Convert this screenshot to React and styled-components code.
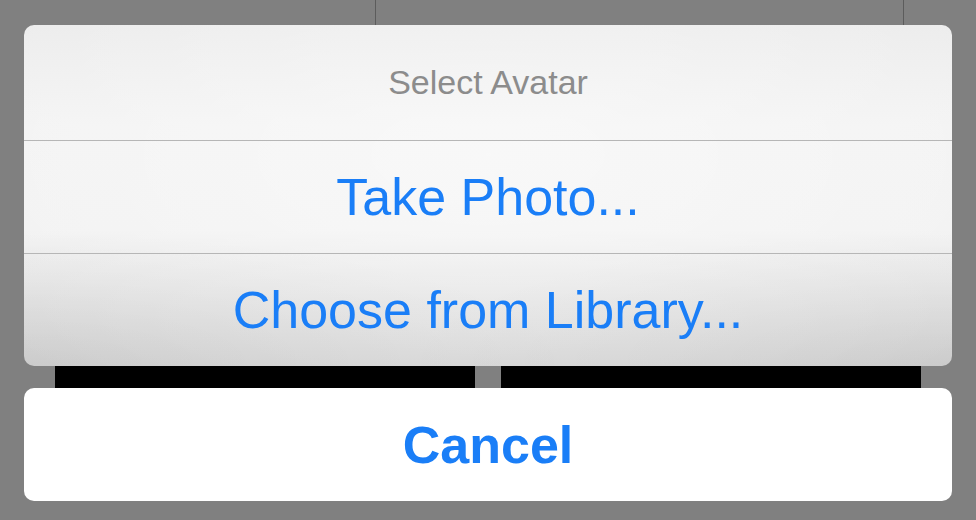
import React from "react";
import styled, { createGlobalStyle } from "styled-components";

const GlobalStyle = createGlobalStyle`
  html, body {
    margin: 0;
    padding: 0;
    background: #808080;
  }
  body {
    font-family: "Liberation Sans", Arial, sans-serif;
    -webkit-font-smoothing: antialiased;
  }
`;

const Screen = styled.div`
  width: 976px;
  height: 520px;
  background: #808080;
  display: flex;
  flex-direction: column;
  padding: 0 24px;
  box-sizing: border-box;
  overflow: hidden;
`;

const TopStrip = styled.div`
  height: 25px;
  position: relative;
  flex-shrink: 0;
`;

// thin divider lines of the page behind the dimmed overlay
const Rule = styled.span`
  position: absolute;
  top: 0;
  bottom: 0;
  left: ${(p) => p.$x}px;
  width: 1px;
  background: #5c5c5c;
`;

const Sheet = styled.div`
  height: 341px;
  border-radius: 10px;
  overflow: hidden;
  display: grid;
  grid-template-rows: 115px 1fr 1fr;
  background:
    radial-gradient(ellipse 80% 95% at 50% 38%, rgba(255,255,255,0.5) 0%, rgba(255,255,255,0) 100%),
    radial-gradient(ellipse 60% 40% at 0% 100%, rgba(0,0,0,0.05) 0%, rgba(0,0,0,0) 100%),
    radial-gradient(ellipse 60% 40% at 100% 100%, rgba(0,0,0,0.05) 0%, rgba(0,0,0,0) 100%),
    linear-gradient(180deg, #eaeaea 0%, #f2f2f2 30%, #f1f1f1 60%, #d9d9d9 92%, #d3d3d3 100%);
  flex-shrink: 0;
`;

const Title = styled.div`
  display: flex;
  align-items: center;
  justify-content: center;
  font-size: 34px;
  color: #8c8c8c;
  padding-bottom: 1px;
`;

const Option = styled.button`
  all: unset;
  display: flex;
  align-items: center;
  justify-content: center;
  border-top: 1px solid #b6b6b6;
  font-family: "Liberation Sans", Arial, sans-serif;
  font-size: 52px;
  color: #1a7ef7;
  cursor: pointer;
`;

const Peek = styled.div`
  height: 22px;
  display: flex;
  gap: 26px;
  padding: 0 31px;
  flex-shrink: 0;
`;

const Bar = styled.div`
  flex: 1;
  background: #000;
`;

const Cancel = styled.button`
  all: unset;
  height: 113px;
  border-radius: 10px;
  background: #fff;
  display: flex;
  align-items: center;
  justify-content: center;
  font-family: "Liberation Sans", Arial, sans-serif;
  font-weight: 700;
  font-size: 52px;
  color: #1a7ef7;
  cursor: pointer;
  flex-shrink: 0;
`;

export default function App() {
  return (
    <>
      <GlobalStyle />
      <Screen>
        <TopStrip>
          <Rule $x={351} />
          <Rule $x={879} />
        </TopStrip>
        <Sheet>
          <Title>Select Avatar</Title>
          <Option>Take Photo...</Option>
          <Option>Choose from Library...</Option>
        </Sheet>
        <Peek>
          <Bar />
          <Bar />
        </Peek>
        <Cancel>Cancel</Cancel>
      </Screen>
    </>
  );
}
